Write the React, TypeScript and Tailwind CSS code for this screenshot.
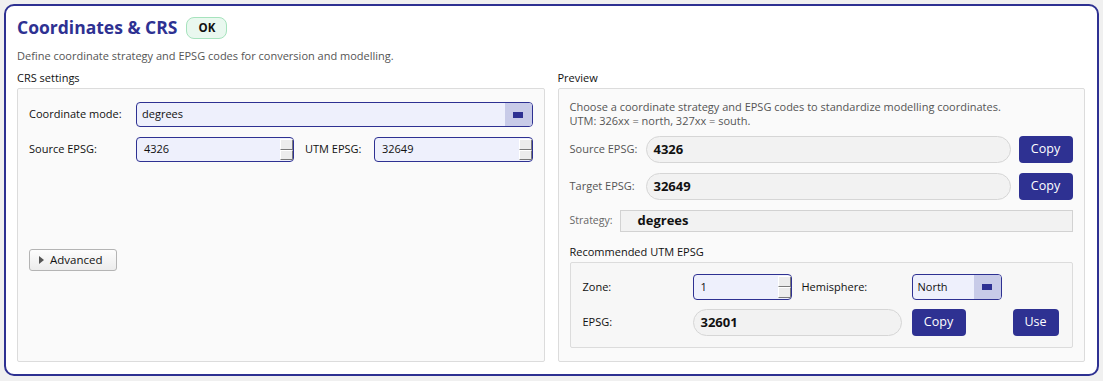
import React from "react";

const FONT = { fontFamily: '"Open Sans", "Noto Sans", sans-serif' };

function SpinButtons() {
  return (
    <div className="flex flex-col w-[13px] h-full py-[1px]">
      <div className="flex-1 bg-[#ececec] border-r border-b border-r-[#7a7a7a] border-b-[#7a7a7a] border-t border-l border-t-white border-l-white" />
      <div className="flex-1 bg-[#ececec] border-r border-b border-r-[#7a7a7a] border-b-[#7a7a7a] border-t border-l border-t-white border-l-white" />
    </div>
  );
}

function SpinBox({ value, className = "" }: { value: string; className?: string }) {
  return (
    <div
      className={`flex items-center h-full bg-[#eef0fc] border border-[#2e3192] rounded-[4px] overflow-hidden ${className}`}
    >
      <span className="flex-1 pl-[7px] text-[11px] text-[#111]">{value}</span>
      <SpinButtons />
    </div>
  );
}

function Combo({ value, className = "" }: { value: string; className?: string }) {
  return (
    <div
      className={`flex items-center h-full bg-[#eef0fc] border border-[#2e3192] rounded-[4px] overflow-hidden ${className}`}
    >
      <span className="flex-1 pl-[5px] text-[11px] text-[#111]">{value}</span>
      <div className="w-[27px] h-full bg-[#c8cbe8] flex items-center justify-center">
        <div className="w-[10px] h-[6px] bg-[#2e3192]" />
      </div>
    </div>
  );
}

function Pill({ value, className = "" }: { value: string; className?: string }) {
  return (
    <div
      className={`flex items-center h-full bg-[#f2f2f2] border border-[#d6d6d6] rounded-full pl-[7px] ${className}`}
    >
      <span className="text-[13px] font-bold text-[#111]">{value}</span>
    </div>
  );
}

function NavyButton({ label, className = "" }: { label: string; className?: string }) {
  return (
    <div
      className={`flex items-center justify-center h-full bg-[#2e3192] rounded-[4px] text-white text-[12.5px] ${className}`}
    >
      {label}
    </div>
  );
}

export default function App() {
  return (
    <div className="w-[1103px] h-[381px] bg-[#f0f0f0] pt-[4px] px-[4px]" style={FONT}>
      <div className="h-[372px] border-2 border-[#2e3192] rounded-[10px] bg-white pl-[11px] pr-[12px] pt-[8px] pb-[12px] flex flex-col">
        {/* Title */}
        <div className="flex items-center h-[28px] gap-[9px]">
          <h1 className="text-[17.5px] font-bold text-[#2e3192] leading-none">Coordinates &amp; CRS</h1>
          <div className="w-[41px] h-[22px] rounded-[8px] border border-[#a6e3bd] bg-[#e9f8ef] flex items-center justify-center text-[11.5px] font-bold text-[#111]">
            OK
          </div>
        </div>
        <p className="mt-[6px] leading-[15px] text-[11px] text-[#555]">
          Define coordinate strategy and EPSG codes for conversion and modelling.
        </p>

        <div className="grid grid-cols-2 gap-x-[13px] mt-[7px] flex-1">
          {/* Left column */}
          <div className="flex flex-col">
            <div className="leading-[16px] text-[11px] text-[#111]">CRS settings</div>
            <div className="mt-[2px] flex-1 border border-[#dcdcdc] rounded-[2px] bg-[#fafafa] pt-[13px] px-[11px]">
              <div className="flex items-center h-[25px]">
                <span className="w-[107px] text-[11px] text-[#111]">Coordinate mode:</span>
                <Combo value="degrees" className="flex-1" />
              </div>
              <div className="flex items-center h-[25px] mt-[10px]">
                <span className="w-[107px] text-[11px] text-[#111]">Source EPSG:</span>
                <SpinBox value="4326" className="w-[158px]" />
                <span className="ml-[11px] w-[69px] text-[11px] text-[#111]">UTM EPSG:</span>
                <SpinBox value="32649" className="flex-1" />
              </div>
              <div className="mt-[87px] w-[88px] h-[22px] border border-[#b4b4b4] rounded-[3px] bg-gradient-to-b from-[#fdfdfd] to-[#ececec] flex items-center pl-[9px] gap-[6px]">
                <svg width="5" height="8" viewBox="0 0 5 8">
                  <polygon points="0,0 5,4 0,8" fill="#555" />
                </svg>
                <span className="text-[11.5px] text-[#111]">Advanced</span>
              </div>
            </div>
          </div>

          {/* Right column */}
          <div className="flex flex-col">
            <div className="leading-[16px] text-[11px] text-[#111]">Preview</div>
            <div className="mt-[2px] flex-1 border border-[#dcdcdc] rounded-[2px] bg-[#fafafa] pt-[11px] px-[11px]">
              <p className="leading-[14px] text-[11px] text-[#555]">
                Choose a coordinate strategy and EPSG codes to standardize modelling coordinates.
              </p>
              <p className="leading-[14px] text-[11px] text-[#555]">UTM: 326xx = north, 327xx = south.</p>

              <div className="flex items-center h-[27px] mt-[8px]">
                <span className="w-[76px] text-[11px] text-[#555]">Source EPSG:</span>
                <Pill value="4326" className="w-[365px]" />
                <NavyButton label="Copy" className="ml-[8px] w-[54px]" />
              </div>
              <div className="flex items-center h-[27px] mt-[10px]">
                <span className="w-[76px] text-[11px] text-[#555]">Target EPSG:</span>
                <Pill value="32649" className="w-[365px]" />
                <NavyButton label="Copy" className="ml-[8px] w-[54px]" />
              </div>
              <div className="flex items-center h-[22px] mt-[10px]">
                <span className="w-[50px] text-[10.5px] text-[#666]">Strategy:</span>
                <div className="flex-1 h-full flex items-center bg-[#f2f2f2] border border-[#d2d2d2] pl-[17px]">
                  <span className="text-[13px] font-bold text-[#111]">degrees</span>
                </div>
              </div>

              <div className="mt-[12px] leading-[16px] text-[11px] text-[#111]">Recommended UTM EPSG</div>
              <div className="mt-[2px] h-[86px] border border-[#dcdcdc] rounded-[2px] bg-[#f7f7f7] pt-[11px] pl-[12px]">
                <div className="flex items-center h-[26px]">
                  <span className="w-[110px] text-[11px] text-[#111]">Zone:</span>
                  <SpinBox value="1" className="w-[99px]" />
                  <span className="ml-[10px] w-[110px] text-[11px] text-[#111]">Hemisphere:</span>
                  <Combo value="North" className="w-[90px]" />
                </div>
                <div className="flex items-center h-[27px] mt-[9px]">
                  <span className="w-[110px] text-[11px] text-[#111]">EPSG:</span>
                  <Pill value="32601" className="w-[209px]" />
                  <NavyButton label="Copy" className="ml-[10px] w-[54px]" />
                  <NavyButton label="Use" className="ml-[47px] w-[46px]" />
                </div>
              </div>
            </div>
          </div>
        </div>
      </div>
    </div>
  );
}
